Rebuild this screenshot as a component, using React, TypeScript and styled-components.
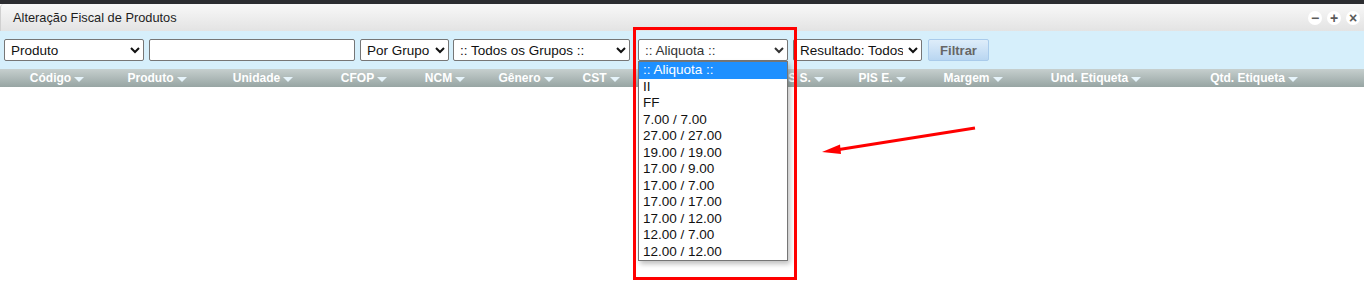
import styled, {createGlobalStyle} from "styled-components";

const GlobalStyle = createGlobalStyle`
  body {
    margin: 0;
    background: #ffffff;
    font-family: "Liberation Sans", Arial, sans-serif;
  }
`

const Page = styled.div`
  position: relative;
  width: 1364px;
  height: 289px;
  overflow: hidden;
  background: #ffffff;
`

const TopStrip = styled.div`
  height: 4px;
  background: #2c2d31;
`

const TitleBar = styled.div`
  height: 27px;
  display: flex;
  align-items: center;
  justify-content: space-between;
  padding: 0 4px 0 12px;
  background: linear-gradient(#f8f8f8, #e3e3e3);
  border-top-left-radius: 4px;
  border-left: 1px solid #d0d0d0;
`

const Title = styled.span`
  font-size: 12.8px;
  color: #1e1e1e;
`

const WinButtons = styled.div`
  display: flex;
  gap: 5px;
`

const WinButton = styled.span`
  width: 14px;
  height: 14px;
  border-radius: 50%;
  background: #ffffff;
  color: #5a5a5a;
  font-size: 14px;
  font-weight: bold;
  line-height: 14px;
  text-align: center;
`

const Toolbar = styled.div`
  height: 38px;
  display: flex;
  align-items: center;
  padding-left: 4px;
  background: #d6effb;
`

const Select = styled.select<{ $w: number; $ml?: number }>`
  width: ${p => p.$w}px;
  height: 22px;
  margin-left: ${p => p.$ml ?? 0}px;
  font-family: "Liberation Sans", Arial, sans-serif;
  font-size: 13.5px;
  color: #111;
  background: #ffffff;
  border: 1px solid #767676;
  border-radius: 2px;
  padding: 0 2px;
`

const TextInput = styled.input`
  width: 206px;
  height: 22px;
  box-sizing: border-box;
  margin-left: 5px;
  border: 1px solid #767676;
  border-radius: 2px;
`

const SelectHolder = styled.div`
  position: relative;
  margin-left: 8px;
  display: flex;
`

const OptionList = styled.div`
  position: absolute;
  top: 22px;
  left: 0;
  width: 150px;
  box-sizing: border-box;
  background: #ffffff;
  border: 1px solid #767676;
  box-shadow: 2px 3px 5px rgba(0, 0, 0, 0.25);
  z-index: 5;
`

const Option = styled.div<{ $active?: boolean }>`
  height: 16.5px;
  line-height: 16.5px;
  padding-left: 4px;
  font-size: 13.5px;
  color: ${p => (p.$active ? "#ffffff" : "#111")};
  background: ${p => (p.$active ? "#1e90ff" : "transparent")};
`

const FilterButton = styled.button`
  width: 61px;
  height: 22px;
  margin-left: 6px;
  font-family: "Liberation Sans", Arial, sans-serif;
  font-size: 13px;
  font-weight: bold;
  color: #666666;
  background: linear-gradient(#deedfa, #b9d6f1);
  border: 1px solid #a9cbeb;
  border-radius: 2px;
`

const HeaderRow = styled.div`
  display: grid;
  grid-template-columns: 114px 86px 126px 76px 86px 76px 74px 110px 94px 80px 102px 144px 172px 1fr;
  height: 18px;
  background: linear-gradient(#c6cfce, #97a5a3);
`

const HeaderCell = styled.div`
  display: flex;
  align-items: center;
  justify-content: center;
  gap: 3px;
  font-size: 12px;
  font-weight: bold;
  color: #ffffff;
  white-space: nowrap;
`

const SortArrow = styled.span`
  width: 0;
  height: 0;
  margin-top: 2px;
  border-left: 5px solid transparent;
  border-right: 5px solid transparent;
  border-top: 5px solid #e6f4fb;
`

const RedBox = styled.div`
  position: absolute;
  left: 633px;
  top: 27px;
  width: 164px;
  height: 253px;
  box-sizing: border-box;
  border: 3px solid #ff0000;
  z-index: 6;
`

const ArrowSvg = styled.svg`
  position: absolute;
  left: 0;
  top: 0;
  z-index: 6;
`

const columns = ["Código", "Produto", "Unidade", "CFOP", "NCM", "Gênero", "CST", "ICMS E.", "ICMS S.", "PIS E.", "Margem", "Und. Etiqueta", "Qtd. Etiqueta"]
const aliquotas = [":: Aliquota ::", "II", "FF", "7.00 / 7.00", "27.00 / 27.00", "19.00 / 19.00", "17.00 / 9.00", "17.00 / 7.00", "17.00 / 17.00", "17.00 / 12.00", "12.00 / 7.00", "12.00 / 12.00"]

const App = () => {
    return (
        <Page>
            <GlobalStyle/>
            <TopStrip/>
            <TitleBar>
                <Title>Alteração Fiscal de Produtos</Title>
                <WinButtons>
                    <WinButton>−</WinButton>
                    <WinButton>+</WinButton>
                    <WinButton>×</WinButton>
                </WinButtons>
            </TitleBar>
            <Toolbar>
                <Select $w={140}><option>Produto</option></Select>
                <TextInput/>
                <Select $w={89} $ml={5}><option>Por Grupo</option></Select>
                <Select $w={177} $ml={4}><option>:: Todos os Grupos ::</option></Select>
                <SelectHolder>
                    <Select $w={150} style={{color: "#333"}}><option>:: Aliquota ::</option></Select>
                    <OptionList>
                        {aliquotas.map((a, i) => (
                            <Option key={a} $active={i === 0}>{a}</Option>
                        ))}
                    </OptionList>
                </SelectHolder>
                <Select $w={129} $ml={5}><option>Resultado: Todos</option></Select>
                <FilterButton>Filtrar</FilterButton>
            </Toolbar>
            <HeaderRow>
                {columns.map(c => (
                    <HeaderCell key={c}>{c}<SortArrow/></HeaderCell>
                ))}
                <div/>
            </HeaderRow>
            <RedBox/>
            <ArrowSvg width="1364" height="289">
                <line x1="975" y1="128" x2="836" y2="150" stroke="#ff0000" strokeWidth="3"/>
                <polygon points="822,152 840,144.5 841,154" fill="#ff0000"/>
            </ArrowSvg>
        </Page>
    )
}

export default App
